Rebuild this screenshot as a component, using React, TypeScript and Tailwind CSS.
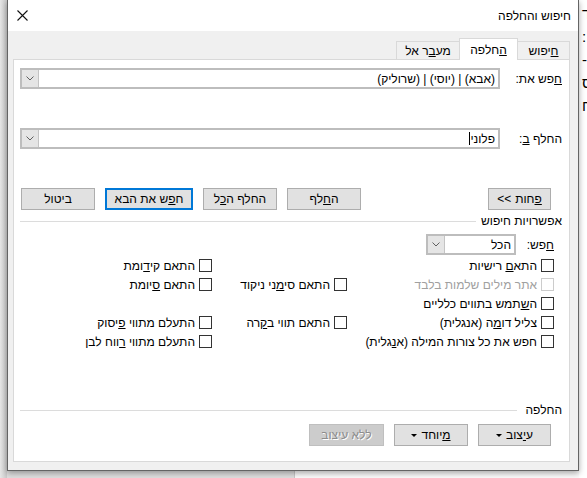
import React from "react";

const font = { fontFamily: '"Liberation Sans", "DejaVu Sans", sans-serif' };

function Chevron() {
    return (
        <svg width="8" height="5" viewBox="0 0 8 5" className="block">
            <path d="M0.5 0.5 L4 4 L7.5 0.5" fill="none" stroke="#606060" strokeWidth="1" />
        </svg>
    );
}

function Combo({ value, width, caret }: { value: string; width?: string; caret?: boolean }) {
    return (
        <div className={`flex h-[21px] items-stretch border-2 border-[#bdbdbd] bg-white ${width ?? "flex-1"}`}>
            <div className="flex flex-1 items-center justify-start px-[3px] text-[12px] leading-none text-black">
                <span>{value}</span>
                {caret && <span className="ml-[1px] h-[13px] w-[1px] bg-black" />}
            </div>
            <div className="flex w-[17px] items-center justify-center border-r border-[#c4c4c4] bg-[#e5e5e5]">
                <Chevron />
            </div>
        </div>
    );
}

function Btn({ children, w, primary, disabled }: { children: React.ReactNode; w: string; primary?: boolean; disabled?: boolean }) {
    let cls = "border border-[#adadad] bg-[#e1e1e1] text-black";
    if (primary) cls = "border-2 border-[#0078d7] bg-[#e1e1e1] text-black";
    if (disabled) cls = "border border-[#bfbfbf] bg-[#cccccc] text-[#8c8c8c] [text-shadow:1px_1px_0_#ffffff]";
    return (
        <div className={`flex h-[22px] items-center justify-center gap-[4px] text-[12px] leading-none ${w} ${cls}`}>
            {children}
        </div>
    );
}

function Tri() {
    return <span className="inline-block h-0 w-0 border-x-[3px] border-t-[3px] border-x-transparent border-t-black" />;
}

function Check({ children, disabled }: { children?: React.ReactNode; disabled?: boolean }) {
    if (!children) return <div />;
    return (
        <div className="flex h-[19px] items-center gap-[4px]">
            <span className={`h-[13px] w-[13px] border bg-white ${disabled ? "border-[#cccccc]" : "border-[#333333]"}`} />
            <span className={`whitespace-nowrap text-[12px] leading-none ${disabled ? "text-[#a0a0a0]" : "text-black"}`}>{children}</span>
        </div>
    );
}

function GroupLine({ label, lineTo }: { label: string; lineTo: string }) {
    return (
        <div className="flex h-[14px] items-center pl-[6px] pr-[7px]">
            <span className="whitespace-nowrap text-[12px] leading-none text-black">{label}</span>
            <div className={`h-px flex-1 bg-[#dcdcdc] ${lineTo}`} />
        </div>
    );
}

export default function App() {
    const docLines = ["ד", "׃", "-", "ס", "ח"];
    return (
        <div className="flex h-[478px] w-[587px] overflow-hidden bg-white" style={font}>
            {/* left strip behind the dialog */}
            <div className="h-full w-[7px] bg-gradient-to-r from-[#e6e6e6] to-[#c9c9c9]" />

            <div className="flex w-[572px] flex-col">
                {/* dialog */}
                <div dir="rtl" className="relative z-10 flex h-[471px] flex-col border-x border-b border-[#646464] bg-[#f0f0f0] shadow-[0_2px_6px_rgba(0,0,0,0.35)]">
                    {/* title bar */}
                    <div className="flex h-[31px] items-center justify-between bg-white pl-[9px] pr-[7px]">
                        <span className="text-[12px] leading-none text-black">חיפוש והחלפה</span>
                        <svg width="11" height="11" viewBox="0 0 11 11">
                            <path d="M0.5 0.5 L10.5 10.5 M10.5 0.5 L0.5 10.5" stroke="#111" strokeWidth="1.1" />
                        </svg>
                    </div>

                    {/* tabs */}
                    <div className="ml-[5px] mr-[8px] mt-[7px] flex h-[21px] items-end">
                        <div className="flex h-[18px] w-[52px] items-center justify-center border-r border-t border-[#d9d9d9] text-[12px] leading-none">
                            <span><u>ח</u>יפוש</span>
                        </div>
                        <div className="relative z-10 -mb-px flex h-[22px] w-[59px] items-center justify-center border-x border-t border-[#d9d9d9] bg-white text-[12px] leading-none">
                            <span><u>ה</u>חלפה</span>
                        </div>
                        <div className="flex h-[18px] w-[63px] items-center justify-center border-l border-t border-[#d9d9d9] text-[12px] leading-none">
                            <span>מע<u>ב</u>ר אל</span>
                        </div>
                    </div>

                    {/* panel */}
                    <div className="mb-[8px] ml-[5px] mr-[8px] flex flex-1 flex-col border border-[#d9d9d9] bg-white">
                        <div className="mt-[8px] flex items-center pl-[6px] pr-[7px]">
                            <div className="w-[62px] text-[12px] leading-none"><u>ח</u>פש את:</div>
                            <Combo value="(אבא) | (יוסי) | (שרוליק)" />
                        </div>
                        <div className="mt-[39px] flex items-center pl-[6px] pr-[7px]">
                            <div className="w-[62px] text-[12px] leading-none">החלף <u>ב</u>:</div>
                            <Combo value="פלוני" caret />
                        </div>

                        {/* action buttons */}
                        <div className="mt-[39px] flex pl-[7px] pr-[18px]">
                            <Btn w="w-[63px]">
                                <span><u>פ</u>חות</span>
                                <span dir="ltr">{"\u200E<<\u200E"}</span>
                            </Btn>
                            <div className="flex-1" />
                            <div className="flex gap-[10px]">
                                <Btn w="w-[74px]"><span>ה<u>ח</u>לף</span></Btn>
                                <Btn w="w-[74px]"><span>החלף ה<u>כ</u>ל</span></Btn>
                                <Btn w="w-[88px]" primary><span>ח<u>פ</u>ש את הבא</span></Btn>
                                <Btn w="w-[74px]"><span>ביטול</span></Btn>
                            </div>
                        </div>

                        <div className="mt-[4px]">
                            <GroupLine label="אפשרויות חיפוש" lineTo="mr-[5px]" />
                        </div>

                        <div className="mt-[6px] flex items-center pr-[15px]">
                            <div className="w-[38px] text-[12px] leading-none"><u>ח</u>פש:</div>
                            <Combo value="הכל" width="w-[90px]" />
                        </div>

                        {/* options */}
                        <div className="mt-px grid grid-cols-[207px_135px_1fr] pr-[15px]">
                            <Check>התא<u>ם</u> רישיות</Check>
                            <Check />
                            <Check>התאם קי<u>ד</u>ומת</Check>

                            <Check disabled>אתר מילים שלמות בלבד</Check>
                            <Check>התאם סי<u>מ</u>ני ניקוד</Check>
                            <Check>התאם <u>ס</u>יומת</Check>

                            <Check>ה<u>ש</u>תמש בתווים כלליים</Check>
                            <Check />
                            <Check />

                            <Check>צליל דו<u>מ</u>ה (אנגלית)</Check>
                            <Check>התאם תווי ב<u>ק</u>רה</Check>
                            <Check>התעלם מתווי <u>פ</u>יסוק</Check>

                            <Check>חפש את כל צורות המילה (א<u>נ</u>גלית)</Check>
                            <Check />
                            <Check>התעלם מתווי <u>ר</u>ווח לבן</Check>
                        </div>

                        <div className="mt-[52px]">
                            <GroupLine label="החלפה" lineTo="mr-[8px]" />
                        </div>

                        <div className="mt-[7px] flex gap-[10px] pr-[18px]">
                            <Btn w="w-[73px]"><span>ע<u>י</u>צוב</span><Tri /></Btn>
                            <Btn w="w-[74px]"><span><u>מ</u>יוחד</span><Tri /></Btn>
                            <Btn w="w-[75px]" disabled><span>ללא עיצוב</span></Btn>
                        </div>
                    </div>
                </div>

                {/* strip under the dialog */}
                <div className="flex h-[7px]">
                    <div className="w-[287px] bg-[#dedede]" />
                    <div className="flex-1 border-l border-[#c8c8c8] bg-[#fafafa]" />
                </div>
            </div>

            {/* document page visible at the right */}
            <div className="h-full w-[8px] overflow-hidden bg-white pl-[3px] pt-[2px]">
                {docLines.map((c, i) => (
                    <div key={i} className="h-[23px] whitespace-nowrap text-[15px] leading-[23px] text-black">
                        {c}
                    </div>
                ))}
            </div>
        </div>
    );
}
